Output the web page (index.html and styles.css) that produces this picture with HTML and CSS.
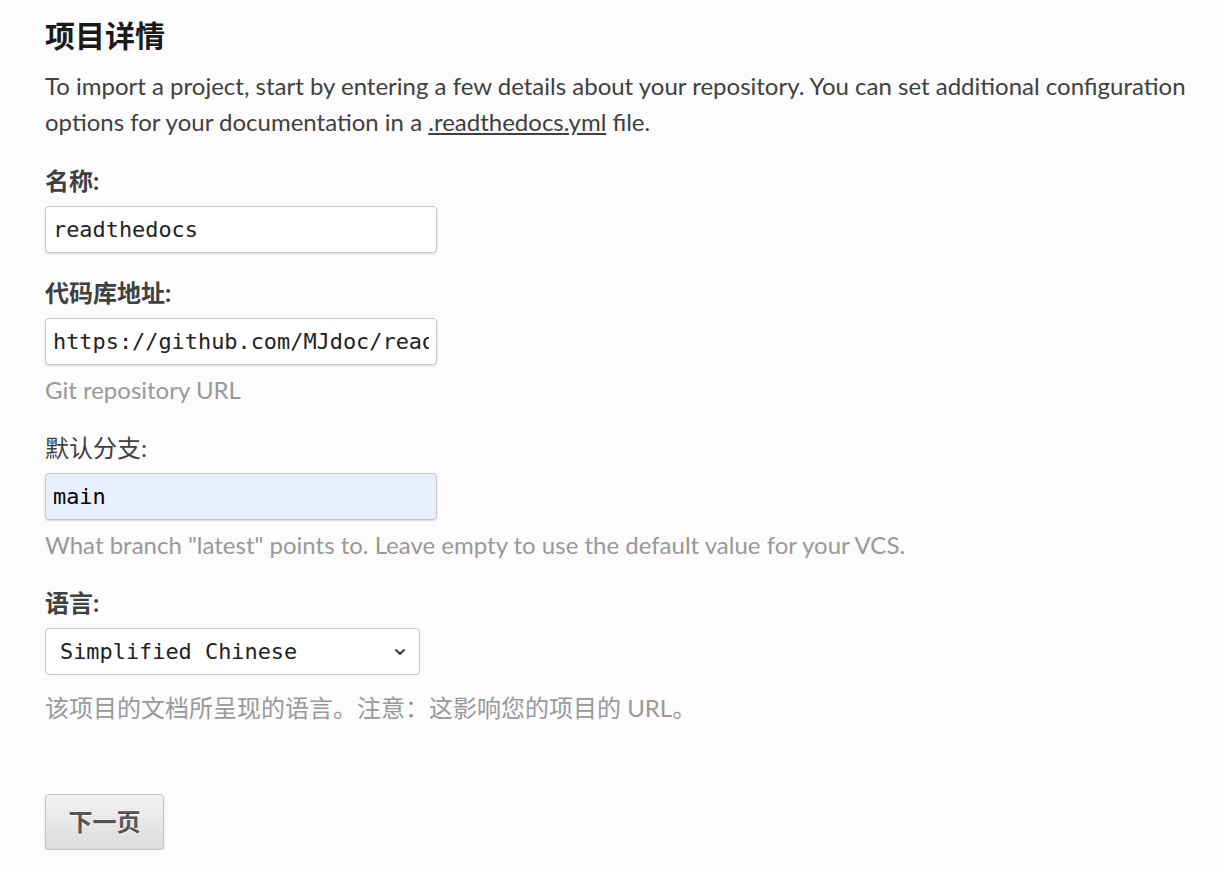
FILE: index.html
```html
<!DOCTYPE html>
<html lang="zh">
<head>
<meta charset="utf-8">
<title>项目详情</title>
<link rel="stylesheet" href="styles.css">
</head>
<body>
<main class="page">
  <h1 class="title">项目详情</h1>
  <p class="intro">To import a project, start by entering a few details about your repository. You can set additional configuration options for your documentation in a <a class="link" href="#">.readthedocs.yml</a> file.</p>

  <div class="field">
    <label class="label bold">名称:</label>
    <input class="input" type="text" value="readthedocs">
  </div>

  <div class="field">
    <label class="label bold">代码库地址:</label>
    <input class="input" type="text" value="https://github.com/MJdoc/readthedocs">
    <div class="help">Git repository URL</div>
  </div>

  <div class="field">
    <label class="label">默认分支:</label>
    <input class="input autofill" type="text" value="main">
    <div class="help">What branch "latest" points to. Leave empty to use the default value for your VCS.</div>
  </div>

  <div class="field">
    <label class="label bold">语言:</label>
    <div class="select">
      <span class="select-text">Simplified Chinese</span>
      <svg class="chev" width="14" height="14" viewBox="0 0 14 14"><path d="M3 5 L7 9 L11 5" fill="none" stroke="#333" stroke-width="1.8" stroke-linecap="round" stroke-linejoin="round"/></svg>
    </div>
    <div class="help help-select">该项目的文档所呈现的语言。注意：这影响您的项目的 URL。</div>
  </div>

  <div class="actions">
    <button class="btn" type="button">下一页</button>
  </div>
</main>
</body>
</html>
```

FILE: styles.css
```css
html, body {
  margin: 0;
  padding: 0;
  background: #fcfcfc;
}
body {
  font-family: Lato, "Noto Sans CJK SC", sans-serif;
  color: #404040;
  font-size: 24px;
  line-height: 36px;
}
.page {
  padding: 17px 0 0 45px;
  width: 1160px;
}
.title {
  margin: 0;
  font-size: 30px;
  line-height: 36px;
  font-weight: 700;
  color: #1a1a1a;
}
.intro {
  margin: 15px 0 0 0;
}
.link {
  color: #404040;
  text-decoration: underline;
}
.field {
  margin-top: 22px;
}
.field:first-of-type {
  margin-top: 23px;
}
.label {
  display: block;
  margin: 0 0 7px 0;
}
.bold {
  font-weight: 700;
}
.input {
  display: block;
  box-sizing: border-box;
  width: 392px;
  height: 47px;
  margin: 0;
  padding: 0 7px;
  font-family: "DejaVu Sans Mono", monospace;
  font-size: 21.9px;
  color: #222;
  background: #fff;
  border: 1px solid #c8c8c8;
  border-radius: 4px;
  box-shadow: 0 1px 2px rgba(0,0,0,0.15);
  outline: none;
}
.autofill {
  background: #e8f0fe;
  color: #000;
}
.help {
  margin-top: 7px;
  color: #999;
}
.help-select {
  margin-top: 15px;
}
.select {
  box-sizing: border-box;
  width: 375px;
  height: 47px;
  display: flex;
  align-items: center;
  justify-content: space-between;
  padding: 0 12px 0 14px;
  background: #fff;
  border: 1px solid #c8c8c8;
  border-radius: 4px;
  font-family: "DejaVu Sans Mono", monospace;
  font-size: 21.9px;
  color: #222;
}
.chev {
  display: block;
}
.actions {
  margin-top: 68px;
}
.btn {
  box-sizing: border-box;
  width: 119px;
  height: 56px;
  font-family: Lato, "Noto Sans CJK SC", sans-serif;
  font-size: 24px;
  font-weight: 700;
  color: #555;
  text-shadow: 0 1px 0 #fff;
  background: linear-gradient(#f2f2f2, #dcdcdc);
  border: 1px solid #c4c4c4;
  border-radius: 4px;
  box-shadow: 0 1px 2px rgba(0,0,0,0.2);
  padding: 0 0 4px 0;
}
```
